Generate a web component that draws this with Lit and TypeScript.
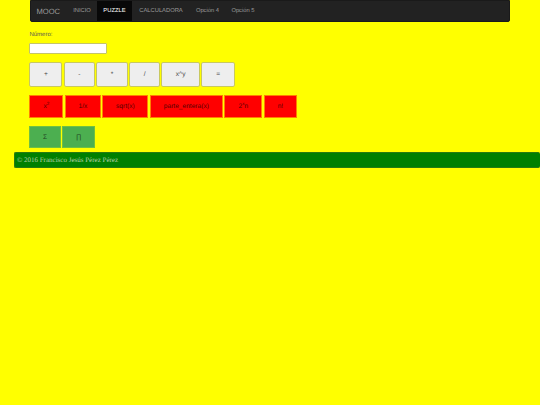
import { LitElement, html, css } from "lit";
import { customElement } from "lit/decorators.js";

const navItems = [
  { t: "INICIO", w: 30 },
  { t: "PUZZLE", w: 35, active: true },
  { t: "CALCULADORA", w: 58 },
  { t: "Opción 4", w: 35 },
  { t: "Opción 5", w: 36 },
];
const ops = [["+", 33], ["-", 31], ["*", 31.5], ["/", 30.5], ["x^y", 38.5], ["=", 33.5]] as const;

@customElement("app-root")
export class AppRoot extends LitElement {
  static styles = css`
    :host { display: block; min-height: 405px; background: #ffff00; font-family: "Liberation Sans", Arial, sans-serif; color: #333; overflow: hidden; text-rendering: geometricPrecision; }
    .main { padding: 0 30px 0 29.4px; }
    nav { display: flex; height: 22px; margin-left: .6px; background: #222; border: 1px solid #1a1a1a; border-radius: 0 0 2px 2px; box-sizing: border-box; align-items: stretch; }
    .brand { font-size: 7.6px; color: #9d9d9d; width: 36px; padding-left: 5.5px; box-sizing: border-box; display: flex; align-items: center; }
    .item { font-size: 5.8px; color: #9d9d9d; display: flex; align-items: center; justify-content: center; }
    .item.active { background: #080808; color: #fff; }
    label { display: block; font-size: 6px; line-height: 8px; margin-top: 9px; color: #555; }
    input { display: block; width: 77.5px; height: 11px; box-sizing: border-box; margin: 4px 0 0; padding: 0; background: #fff; border: 1px solid #c4c46a; border-radius: 1px; }
    .row { display: flex; gap: 1.5px; }
    button { font-family: inherit; font-size: 6.6px; padding: 0; box-sizing: border-box; color: #444; text-rendering: geometricPrecision; }
    .ops { margin-top: 8px; }
    .ops button { height: 25px; background: #eee; border: 1px solid #c8c860; border-radius: 2px; }
    .fn { margin-top: 7.5px; }
    .fn button { height: 23px; background: #f00; border: 1px solid #ff8000; color: #500; }
    sup { font-size: 4.5px; line-height: 0; }
    .agg { margin-top: 8.5px; }
    .agg button { height: 22px; background: #4caf50; border: 1px solid #70c040; color: #224422; }
    footer { margin: 4px 0 0 14.4px; height: 16px; box-sizing: border-box; background: #008000; border: 1px solid #2a7a10; border-right: none; border-radius: 2px; font-family: "Liberation Serif", serif; font-size: 7px; line-height: 14px; padding-left: 1.5px; color: #b8d0a8; }
  `;
  render() {
    return html`
      <div class="main">
        <nav>
          <div class="brand">MOOC</div>
          ${navItems.map(n => html`<div class="item ${n.active ? "active" : ""}" style="width:${n.w}px">${n.t}</div>`)}
        </nav>
        <label>Número:</label>
        <input type="text" />
        <div class="row ops">${ops.map(([t, w]) => html`<button style="width:${w}px">${t}</button>`)}</div>
        <div class="row fn">
          <button style="width:34px">x<sup>2</sup></button>
          <button style="width:36px">1/x</button>
          <button style="width:46px">sqrt(x)</button>
          <button style="width:73px">parte_entera(x)</button>
          <button style="width:38px">2<sup>x</sup>n</button>
          <button style="width:33px">n!</button>
        </div>
        <div class="row agg">
          <button style="width:31.5px">Σ</button>
          <button style="width:32.5px">∏</button>
        </div>
      </div>
      <footer>© 2016 Francisco Jesús Pérez Pérez</footer>
    `;
  }
}
